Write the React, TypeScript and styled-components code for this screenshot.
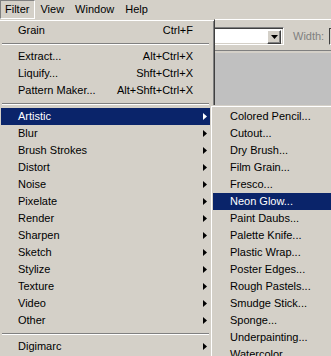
import React from 'react';
import styled, { createGlobalStyle } from 'styled-components';

const GlobalStyle = createGlobalStyle`
    body {
        margin: 0;
        background: #d4d0c8;
        font-family: Tahoma, "Liberation Sans", Arial, sans-serif;
        font-size: 11px;
        color: #000;
        overflow: hidden;
    }
`;

const Screen = styled.div`
    position: relative;
    width: 331px;
    height: 356px;
    overflow: hidden;
    background: #d4d0c8;
    display: flex;
    flex-direction: column;
`;

const MenuBar = styled.div`
    display: flex;
    height: 19px;
    flex-shrink: 0;
`;

const MenuTitle = styled.div<{ $open?: boolean }>`
    height: 17px;
    line-height: 17px;
    padding: 0 5px 0 4px;
    border: 1px solid transparent;
    border-color: ${p => (p.$open ? '#808080 #fff #fff #808080' : 'transparent')};
`;

const Toolbar = styled.div`
    display: flex;
    align-items: center;
    height: 30px;
    flex-shrink: 0;
    border-top: 1px solid #fff;
    border-bottom: 1px solid #808080;
    padding: 0 0 0 150px;
    box-sizing: content-box;
    margin-bottom: 2px;
    overflow: hidden;
    & > * {
        flex-shrink: 0;
    }
`;

const Combo = styled.div`
    display: flex;
    width: 130px;
    height: 14px;
    padding: 1px;
    background: #fff;
    border: 1px solid;
    border-color: #808080 #fff #fff #808080;
    box-shadow: inset 1px 1px #404040, inset -1px -1px #d4d0c8;
    justify-content: flex-end;
    margin-top: 2px;
`;

const ComboButton = styled.div`
    width: 12px;
    height: 12px;
    margin-top: 1px;
    margin-right: 1px;
    background: #d4d0c8;
    border: 1px solid;
    border-color: #fff #404040 #404040 #fff;
    box-shadow: inset -1px -1px #808080;
    display: flex;
    align-items: center;
    justify-content: center;
`;

const Label = styled.span`
    color: #808080;
    margin-left: 9px;
    margin-top: 2px;
`;

const Field = styled.div`
    width: 30px;
    height: 15px;
    margin-left: 5px;
    margin-top: 2px;
    background: #d4d0c8;
    border: 1px solid;
    border-color: #404040 #fff #fff #404040;
`;

const Canvas = styled.div`
    flex: 1;
    background: #c0c0c0;
`;

const Menu = styled.div<{ $left: number; $top: number; $width: number }>`
    position: absolute;
    left: ${p => p.$left}px;
    top: ${p => p.$top}px;
    width: ${p => p.$width}px;
    background: #d4d0c8;
    border: 1px solid;
    border-color: #d4d0c8 #404040 #404040 #d4d0c8;
    box-shadow: inset 1px 1px #fff, inset -1px -1px #808080;
    padding: 2px 4px 2px 2px;
`;

const Item = styled.div<{ $active?: boolean }>`
    display: flex;
    align-items: center;
    height: 17px;
    line-height: 17px;
    padding: 0 17px 0 17px;
    white-space: nowrap;
    background: ${p => (p.$active ? '#0a246a' : 'transparent')};
    color: ${p => (p.$active ? '#fff' : '#000')};
`;

const ItemLabel = styled.span`
    flex: 1;
`;

const Shortcut = styled.span`
    margin-left: 16px;
`;

const Arrow = styled.svg`
    margin-right: -14px;
`;

const Separator = styled.div`
    height: 9px;
    display: flex;
    align-items: center;
    padding: 0 1px;
    &::after {
        content: '';
        flex: 1;
        border-top: 1px solid #808080;
        border-bottom: 1px solid #fff;
        box-sizing: border-box;
        height: 2px;
    }
`;

const SubArrow = ({ active }: { active?: boolean }) => (
    <Arrow width="4" height="7" viewBox="0 0 4 7">
        <polygon points="0,0 4,3.5 0,7" fill={active ? '#fff' : '#000'} />
    </Arrow>
);

type Entry = { label: string; shortcut?: string; sub?: boolean; active?: boolean } | 'sep';

const filterItems: Entry[] = [
    { label: 'Grain', shortcut: 'Ctrl+F' },
    'sep',
    { label: 'Extract...', shortcut: 'Alt+Ctrl+X' },
    { label: 'Liquify...', shortcut: 'Shft+Ctrl+X' },
    { label: 'Pattern Maker...', shortcut: 'Alt+Shft+Ctrl+X' },
    'sep',
    { label: 'Artistic', sub: true, active: true },
    { label: 'Blur', sub: true },
    { label: 'Brush Strokes', sub: true },
    { label: 'Distort', sub: true },
    { label: 'Noise', sub: true },
    { label: 'Pixelate', sub: true },
    { label: 'Render', sub: true },
    { label: 'Sharpen', sub: true },
    { label: 'Sketch', sub: true },
    { label: 'Stylize', sub: true },
    { label: 'Texture', sub: true },
    { label: 'Video', sub: true },
    { label: 'Other', sub: true },
    'sep',
    { label: 'Digimarc', sub: true },
];

const artisticItems: Entry[] = [
    { label: 'Colored Pencil...' },
    { label: 'Cutout...' },
    { label: 'Dry Brush...' },
    { label: 'Film Grain...' },
    { label: 'Fresco...' },
    { label: 'Neon Glow...', active: true },
    { label: 'Paint Daubs...' },
    { label: 'Palette Knife...' },
    { label: 'Plastic Wrap...' },
    { label: 'Poster Edges...' },
    { label: 'Rough Pastels...' },
    { label: 'Smudge Stick...' },
    { label: 'Sponge...' },
    { label: 'Underpainting...' },
    { label: 'Watercolor...' },
];

const renderItems = (items: Entry[]) =>
    items.map((it, i) =>
        it === 'sep' ? (
            <Separator key={i} />
        ) : (
            <Item key={i} $active={it.active}>
                <ItemLabel>{it.label}</ItemLabel>
                {it.shortcut && <Shortcut>{it.shortcut}</Shortcut>}
                {it.sub && <SubArrow active={it.active} />}
            </Item>
        )
    );

const App = () => {
    return (
        <Screen>
            <GlobalStyle />
            <MenuBar>
                <MenuTitle $open>Filter</MenuTitle>
                <MenuTitle>View</MenuTitle>
                <MenuTitle>Window</MenuTitle>
                <MenuTitle>Help</MenuTitle>
            </MenuBar>
            <Toolbar>
                <Combo>
                    <ComboButton>
                        <svg width="7" height="4" viewBox="0 0 7 4">
                            <polygon points="0,0 7,0 3.5,4" fill="#000" />
                        </svg>
                    </ComboButton>
                </Combo>
                <Label>Width:</Label>
                <Field />
            </Toolbar>
            <Canvas />

            <Menu $left={-2} $top={19} $width={209}>
                {renderItems(filterItems)}
            </Menu>
            <Menu $left={210} $top={105} $width={160}>
                {renderItems(artisticItems)}
            </Menu>
        </Screen>
    );
};

export default App;
